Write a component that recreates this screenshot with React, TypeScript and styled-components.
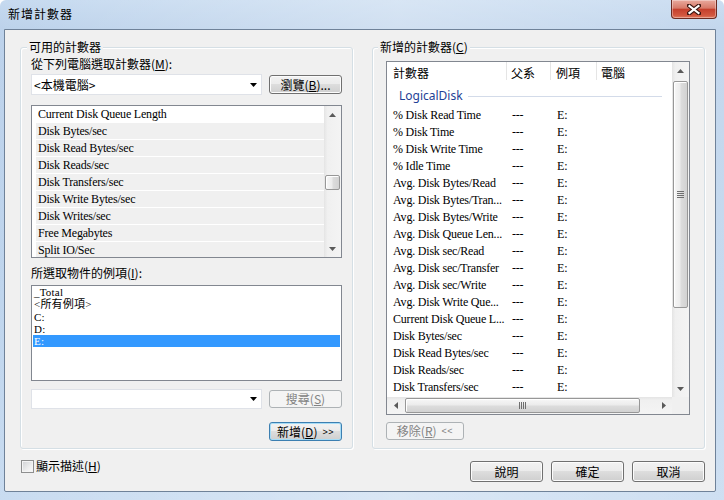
import React from 'react';
import styled, { createGlobalStyle } from 'styled-components';

const cjk = `"Noto Sans CJK TC", "Noto Sans CJK JP", sans-serif`;
const serif = `"Liberation Serif", "Noto Sans CJK TC", serif`;

const GlobalStyle = createGlobalStyle`
  html, body { margin: 0; padding: 0; background: #fff; }
  body { font-family: ${cjk}; font-size: 12px; color: #000; }
  * { box-sizing: border-box; }
`;

const counters = [
  'Current Disk Queue Length',
  'Disk Bytes/sec',
  'Disk Read Bytes/sec',
  'Disk Reads/sec',
  'Disk Transfers/sec',
  'Disk Write Bytes/sec',
  'Disk Writes/sec',
  'Free Megabytes',
  'Split IO/Sec',
];

const instances = ['_Total', '<所有例項>', 'C:', 'D:', 'E:'];

const added = [
  '% Disk Read Time',
  '% Disk Time',
  '% Disk Write Time',
  '% Idle Time',
  'Avg. Disk Bytes/Read',
  'Avg. Disk Bytes/Tran...',
  'Avg. Disk Bytes/Write',
  'Avg. Disk Queue Len...',
  'Avg. Disk sec/Read',
  'Avg. Disk sec/Transfer',
  'Avg. Disk sec/Write',
  'Avg. Disk Write Que...',
  'Current Disk Queue L...',
  'Disk Bytes/sec',
  'Disk Read Bytes/sec',
  'Disk Reads/sec',
  'Disk Transfers/sec',
];

/* ---------- window frame ---------- */

const Window = styled.div`
  width: 724px;
  height: 500px;
  display: flex;
  flex-direction: column;
  padding: 0 8px 8px 4px;
  border-radius: 6px 6px 0 0;
  overflow: hidden;
  background:
    linear-gradient(90deg, rgba(255,255,255,0.05) 0%, rgba(255,255,255,0.35) 55%, rgba(255,255,255,0.15) 100%),
    linear-gradient(180deg, #c3d8ef 0px, #b9d0ea 28px, #bcd3ec 60%, #c6daf0 100%);
`;

const TitleBar = styled.div`
  height: 29px;
  flex: none;
  display: flex;
  justify-content: space-between;
  align-items: flex-start;
`;

const TitleText = styled.span`
  margin: 7px 0 0 4px;
  font-size: 12px;
  line-height: 14px;
  letter-spacing: 1px;
  color: #000;
`;

const CloseButton = styled.div`
  width: 46px;
  height: 19px;
  margin-right: -1px;
  border: 1px solid #6b2b22;
  border-top: none;
  border-radius: 0 0 4px 4px;
  background: linear-gradient(180deg, #e9aa9e 0%, #d77a69 45%, #c5402d 52%, #d2573f 85%, #e07a5f 100%);
  box-shadow: inset 0 0 0 1px rgba(255,255,255,0.35);
  display: flex;
  align-items: center;
  justify-content: center;
`;

const Client = styled.div`
  flex: 1;
  display: flex;
  flex-direction: column;
  background: #f0f0f0;
  border: 1px solid #6f8299;
  border-radius: 0 0 2px 2px;
  padding: 17px 10px 0 15px;
`;

/* ---------- group boxes ---------- */

const GroupsRow = styled.div`
  display: flex;
  gap: 19px;
`;

const GroupBox = styled.div<{ $pad: string }>`
  position: relative;
  width: 333px;
  height: 402px;
  display: flex;
  flex-direction: column;
  padding: ${p => p.$pad};
  border: 1px solid #d5dfe5;
  border-radius: 3px;
  box-shadow: inset 1px 1px 0 #fff, 1px 1px 0 #fff;
`;

const GroupTitle = styled.span<{ $left: number }>`
  position: absolute;
  top: -8px;
  left: ${p => p.$left}px;
  padding: 0 2px;
  background: #f0f0f0;
  font-size: 12px;
  line-height: 14px;
`;

const Label = styled.div<{ $mt?: number }>`
  margin-top: ${p => p.$mt ?? 0}px;
  font-size: 12px;
  line-height: 14px;
`;

const ControlRow = styled.div<{ $mt: number; $h: number }>`
  margin-top: ${p => p.$mt}px;
  height: ${p => p.$h}px;
  display: flex;
  align-items: center;
  gap: 7px;
`;

const Combo = styled.div<{ $h: number }>`
  width: 231px;
  height: ${p => p.$h}px;
  display: flex;
  align-items: center;
  justify-content: space-between;
  padding: 0 4px 0 2px;
  background: #fff;
  border: 1px solid #dfe2e8;
  font-size: 12px;
  line-height: 14px;
`;

type BtnKind = 'normal' | 'disabled' | 'default';

const Button = styled.div<{ $w: number; $h: number; $kind?: BtnKind; $mt?: number }>`
  width: ${p => p.$w}px;
  height: ${p => p.$h}px;
  margin-top: ${p => p.$mt ?? 0}px;
  flex: none;
  display: flex;
  align-items: center;
  justify-content: center;
  border-radius: 3px;
  font-family: ${cjk};
  font-size: 12px;
  line-height: 14px;
  white-space: nowrap;
  border: 1px solid ${p => (p.$kind === 'disabled' ? '#adb2b5' : p.$kind === 'default' ? '#3c7fb1' : '#707070')};
  color: ${p => (p.$kind === 'disabled' ? '#838383' : '#000')};
  background: ${p =>
    p.$kind === 'disabled'
      ? '#f4f4f4'
      : 'linear-gradient(180deg, #f2f2f2 0%, #ebebeb 49%, #dddddd 50%, #cfcfcf 100%)'};
  box-shadow: ${p =>
    p.$kind === 'disabled' ? 'none' : p.$kind === 'default' ? 'inset 0 0 0 1px #a6dcf6' : 'inset 0 0 0 1px #fcfcfc'};
`;

const Chevrons = styled.span`
  margin-left: 5px;
  font-family: "Liberation Sans", sans-serif;
  font-size: 9px;
  letter-spacing: 0.5px;
`;

/* ---------- list boxes ---------- */

const ListFrame = styled.div<{ $mt: number; $h: number }>`
  margin-top: ${p => p.$mt}px;
  height: ${p => p.$h}px;
  flex: none;
  display: flex;
  background: #fff;
  border: 1px solid #828790;
  overflow: hidden;
`;

const CounterRows = styled.div`
  flex: 1;
  overflow: hidden;
`;

const CounterRow = styled.div<{ $plain: boolean }>`
  height: 17px;
  margin-left: 4px;
  padding-left: 2px;
  line-height: 16px;
  font-family: ${serif};
  font-size: 12px;
  letter-spacing: -0.2px;
  white-space: nowrap;
  background: ${p => (p.$plain ? '#fff' : '#f0f0f0')};
  border-bottom: 1px solid #fff;
`;

const InstanceRows = styled.div`
  flex: 1;
`;

const InstanceRow = styled.div<{ $selected: boolean }>`
  height: 12.25px;
  margin: 0 1px;
  padding-left: 1px;
  line-height: 12.25px;
  font-family: ${serif};
  font-size: 11px;
  letter-spacing: 0.2px;
  white-space: nowrap;
  overflow: hidden;
  background: ${p => (p.$selected ? '#3399ff' : 'transparent')};
  color: ${p => (p.$selected ? '#fff' : '#000')};
`;

/* ---------- list view ---------- */

const ListView = styled.div`
  height: 354px;
  flex: none;
  display: grid;
  grid-template-columns: 1fr 17px;
  grid-template-rows: 1fr 17px;
  background: #fff;
  border: 1px solid #828790;
  overflow: hidden;
`;

const ListMain = styled.div`
  overflow: hidden;
  min-width: 0;
`;

const Columns = styled.div`
  display: grid;
  grid-template-columns: 120px 44px 46px 1fr;
`;

const HeaderCell = styled.div<{ $pl: number; $last?: boolean }>`
  height: 18px;
  padding: 4px 0 0 ${p => p.$pl}px;
  font-size: 12px;
  line-height: 14px;
  border-right: ${p => (p.$last ? 'none' : '1px solid #e5e5e5')};
`;

const DataCell = styled.div<{ $pl: number }>`
  height: 17px;
  padding-left: ${p => p.$pl}px;
  line-height: 17px;
  font-family: ${serif};
  font-size: 12px;
  letter-spacing: -0.2px;
  white-space: nowrap;
  overflow: hidden;
`;

const GroupHeader = styled.div`
  height: 27px;
  padding: 5px 10px 0 12px;
  display: flex;
  align-items: center;
  gap: 5px;
`;

const GroupName = styled.span`
  font-family: "Noto Sans", "Open Sans", sans-serif;
  font-size: 12px;
  line-height: 16px;
  color: #1e4196;
`;

const GroupLine = styled.span`
  flex: 1;
  height: 1px;
  background: #d3dbe9;
`;

const Corner = styled.div`
  background: #f0f0f0;
`;

/* ---------- scroll bars ---------- */

const VScrollBar = styled.div`
  width: 17px;
  display: flex;
  flex-direction: column;
  background: linear-gradient(90deg, #e4e4e4 0%, #f0f0f0 20%, #f4f4f4 100%);
`;

const HScrollBar = styled.div`
  height: 17px;
  display: flex;
  background: linear-gradient(180deg, #e4e4e4 0%, #f0f0f0 20%, #f4f4f4 100%);
`;

const ArrowBox = styled.div`
  width: 17px;
  height: 17px;
  flex: none;
  display: flex;
  align-items: center;
  justify-content: center;
`;

const Gutter = styled.div<{ $vertical: boolean }>`
  flex: 1;
  display: flex;
  flex-direction: ${p => (p.$vertical ? 'column' : 'row')};
  align-items: center;
`;

const Thumb = styled.div<{ $vertical: boolean; $offset: number; $size: number }>`
  flex: none;
  ${p =>
    p.$vertical
      ? `margin-top: ${p.$offset}px; height: ${p.$size}px; width: 15px;`
      : `margin-left: ${p.$offset}px; width: ${p.$size}px; height: 15px;`}
  display: flex;
  align-items: center;
  justify-content: center;
  border: 1px solid #979797;
  border-radius: 2px;
  background: linear-gradient(${p => (p.$vertical ? '90deg' : '180deg')}, #f7f7f7 0%, #ececec 45%, #dcdcdc 55%, #d2d2d2 100%);
  box-shadow: inset 1px 1px 0 #fff;
`;

const Arrow = ({ dir }: { dir: 'up' | 'down' | 'left' | 'right' }) => {
  const pts = {
    up: '0,4 3.5,0 7,4',
    down: '0,0 7,0 3.5,4',
    left: '4,0 4,7 0,3.5',
    right: '0,0 4,3.5 0,7',
  }[dir];
  const vertical = dir === 'up' || dir === 'down';
  return (
    <svg width={vertical ? 7 : 4} height={vertical ? 4 : 7} viewBox={vertical ? '0 0 7 4' : '0 0 4 7'}>
      <polygon points={pts} fill="#5a5a5a" />
    </svg>
  );
};

const Grip = ({ vertical }: { vertical: boolean }) => (
  <svg width={vertical ? 7 : 8} height={vertical ? 8 : 7}>
    {[0, 2, 4, 6].map(i =>
      vertical ? (
        <rect key={i} x={0} y={i} width={7} height={1} fill="#6f6f6f" />
      ) : (
        <rect key={i} x={i} y={0} width={1} height={7} fill="#6f6f6f" />
      )
    )}
  </svg>
);

const ScrollBar = ({
  vertical,
  offset,
  size,
  grip,
}: {
  vertical: boolean;
  offset: number;
  size: number;
  grip?: boolean;
}) => {
  const Bar = vertical ? VScrollBar : HScrollBar;
  return (
    <Bar>
      <ArrowBox>
        <Arrow dir={vertical ? 'up' : 'left'} />
      </ArrowBox>
      <Gutter $vertical={vertical}>
        <Thumb $vertical={vertical} $offset={offset} $size={size}>
          {grip && <Grip vertical={vertical} />}
        </Thumb>
      </Gutter>
      <ArrowBox>
        <Arrow dir={vertical ? 'down' : 'right'} />
      </ArrowBox>
    </Bar>
  );
};

const DropArrow = () => (
  <svg width="7" height="4" viewBox="0 0 7 4">
    <polygon points="0,0 7,0 3.5,4" fill="#000" />
  </svg>
);

/* ---------- bottom row ---------- */

const BottomRow = styled.div`
  margin-top: 10px;
  display: flex;
  align-items: flex-start;
`;

const CheckWrap = styled.div`
  margin-left: 1px;
  display: flex;
  align-items: center;
  gap: 2px;
  font-size: 12px;
  line-height: 14px;
`;

const CheckBox = styled.div`
  width: 13px;
  height: 13px;
  border: 1px solid #8e8f8f;
  background: linear-gradient(135deg, #cfd1d4 0%, #eeeeee 60%, #fbfbfb 100%);
  box-shadow: inset 0 0 0 1px #f4f4f4;
`;

const DialogButtons = styled.div`
  margin-left: auto;
  margin-top: 2px;
  display: flex;
  gap: 8px;
`;

export default function App() {
  return (
    <>
      <GlobalStyle />
      <Window>
        <TitleBar>
          <TitleText>新增計數器</TitleText>
          <CloseButton>
            <svg width="14" height="11" viewBox="0 0 14 11">
              <path d="M2 1.5 L12 9.5 M12 1.5 L2 9.5" stroke="#3a1510" strokeWidth="4.2" strokeLinecap="round" />
              <path d="M2.5 2 L11.5 9 M11.5 2 L2.5 9" stroke="#fff" strokeWidth="2.2" strokeLinecap="square" />
            </svg>
          </CloseButton>
        </TitleBar>

        <Client>
          <GroupsRow>
            <GroupBox $pad="9px 10px 0 10px">
              <GroupTitle $left={6}>可用的計數器</GroupTitle>
              <Label>
                從下列電腦選取計數器(<u>M</u>):
              </Label>
              <ControlRow $mt={3} $h={21}>
                <Combo $h={21}>
                  <span>&lt;本機電腦&gt;</span>
                  <DropArrow />
                </Combo>
                <Button $w={73} $h={19}>
                  <span>
                    瀏覽(<u>B</u>)...
                  </span>
                </Button>
              </ControlRow>

              <ListFrame $mt={10} $h={153}>
                <CounterRows>
                  {counters.map((c, i) => (
                    <CounterRow key={c} $plain={i === 0}>
                      {c}
                    </CounterRow>
                  ))}
                </CounterRows>
                <ScrollBar vertical offset={52} size={15} />
              </ListFrame>

              <Label $mt={8}>
                所選取物件的例項(<u>I</u>):
              </Label>
              <ListFrame $mt={5} $h={96}>
                <InstanceRows>
                  {instances.map(n => (
                    <InstanceRow key={n} $selected={n === 'E:'}>
                      {n}
                    </InstanceRow>
                  ))}
                </InstanceRows>
              </ListFrame>

              <ControlRow $mt={8} $h={20}>
                <Combo $h={20}>
                  <span />
                  <DropArrow />
                </Combo>
                <Button $w={73} $h={18} $kind="disabled">
                  <span>
                    搜尋(<u>S</u>)
                  </span>
                </Button>
              </ControlRow>

              <Button $w={73} $h={19} $mt={13} $kind="default" style={{ alignSelf: 'flex-end' }}>
                <span>
                  新增(<u>D</u>)
                </span>
                <Chevrons>&gt;&gt;</Chevrons>
              </Button>
            </GroupBox>

            <GroupBox $pad="13px 14px 0 13px">
              <GroupTitle $left={5}>
                新增的計數器(<u>C</u>)
              </GroupTitle>
              <ListView>
                <ListMain>
                  <Columns>
                    <HeaderCell $pl={6}>計數器</HeaderCell>
                    <HeaderCell $pl={4}>父系</HeaderCell>
                    <HeaderCell $pl={5}>例項</HeaderCell>
                    <HeaderCell $pl={4} $last>
                      電腦
                    </HeaderCell>
                  </Columns>
                  <GroupHeader>
                    <GroupName>LogicalDisk</GroupName>
                    <GroupLine />
                  </GroupHeader>
                  {added.map(name => (
                    <Columns key={name}>
                      <DataCell $pl={6}>{name}</DataCell>
                      <DataCell $pl={5}>---</DataCell>
                      <DataCell $pl={6}>E:</DataCell>
                      <DataCell $pl={5} />
                    </Columns>
                  ))}
                </ListMain>
                <ScrollBar vertical offset={2} size={227} grip />
                <ScrollBar vertical={false} offset={1} size={235} grip />
                <Corner />
              </ListView>
              <Button $w={78} $h={18} $mt={7} $kind="disabled">
                <span>
                  移除(<u>R</u>)
                </span>
                <Chevrons>&lt;&lt;</Chevrons>
              </Button>
            </GroupBox>
          </GroupsRow>

          <BottomRow>
            <CheckWrap>
              <CheckBox />
              <span>
                顯示描述(<u>H</u>)
              </span>
            </CheckWrap>
            <DialogButtons>
              <Button $w={73} $h={21}>說明</Button>
              <Button $w={73} $h={21}>確定</Button>
              <Button $w={73} $h={21}>取消</Button>
            </DialogButtons>
          </BottomRow>
        </Client>
      </Window>
    </>
  );
}
